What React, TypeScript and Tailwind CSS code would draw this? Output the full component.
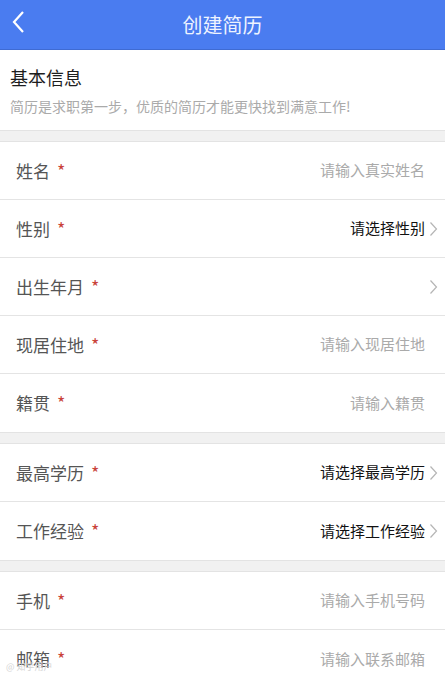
import React from 'react';

type Row = {
  label: string;
  kind: 'input' | 'select' | 'date';
  text?: string;
};

const groups: Row[][] = [
  [
    { label: '姓名', kind: 'input', text: '请输入真实姓名' },
    { label: '性别', kind: 'select', text: '请选择性别' },
    { label: '出生年月', kind: 'date' },
    { label: '现居住地', kind: 'input', text: '请输入现居住地' },
    { label: '籍贯', kind: 'input', text: '请输入籍贯' },
  ],
  [
    { label: '最高学历', kind: 'select', text: '请选择最高学历' },
    { label: '工作经验', kind: 'select', text: '请选择工作经验' },
  ],
  [
    { label: '手机', kind: 'input', text: '请输入手机号码' },
    { label: '邮箱', kind: 'input', text: '请输入联系邮箱' },
  ],
];

const Chevron: React.FC = () => (
  <svg width="9" height="16" viewBox="0 0 9 16" className="ml-[4px] shrink-0">
    <path d="M1.5 1.5 L7.5 8 L1.5 14.5" fill="none" stroke="#b5b5b5" strokeWidth="1.2" />
  </svg>
);

const FormRow: React.FC<{ row: Row; last: boolean }> = ({ row, last }) => (
  <div
    className={
      'flex h-[58px] items-center justify-between pl-[16px] pr-[7px] bg-white ' +
      (last ? '' : 'border-b border-[#e4e4e4]')
    }
  >
    <div className="flex items-center text-[17px] text-[#555]">
      <span>{row.label}</span>
      <span className="ml-[7px] -mt-[1px] text-[18px] text-[#c9433a]">*</span>
    </div>
    {row.kind === 'input' && (
      <span className="mr-[13px] text-[15px] text-[#aaa]">{row.text}</span>
    )}
    {row.kind === 'select' && (
      <div className="flex items-center">
        <span className="text-[15px] text-[#111]">{row.text}</span>
        <Chevron />
      </div>
    )}
    {row.kind === 'date' && <Chevron />}
  </div>
);

const Band: React.FC = () => (
  <div className="h-[12px] bg-[#f1f1f1] border-y border-[#e3e3e3]" />
);

export default function App() {
  return (
    <div
      className="relative h-[674px] w-[445px] overflow-hidden bg-white"
      style={{ fontFamily: '"Noto Sans CJK SC", "Noto Sans", sans-serif' }}
    >
      <header className="relative flex h-[50px] items-center justify-center bg-[#4a7cf0] border-b border-[#3f6bd3]">
        <svg width="16" height="24" viewBox="0 0 16 24" className="absolute left-[10px] top-[10px]">
          <path d="M13 2 L4 12 L13 22" fill="none" stroke="#ffffff" strokeWidth="2.2" />
        </svg>
        <h1 className="text-[20px] text-[#eef3ff]">创建简历</h1>
      </header>

      <section className="flex h-[80px] flex-col justify-center px-[10px]">
        <h2 className="text-[18px] leading-[26px] text-[#1e1e1e]">基本信息</h2>
        <p className="mt-[6px] text-[14px] leading-[20px] text-[#aaa]">
          简历是求职第一步，优质的简历才能更快找到满意工作!
        </p>
      </section>

      {groups.map((g, gi) => (
        <div key={gi}>
          <Band />
          {g.map((row, ri) => (
            <FormRow key={row.label} row={row} last={ri === g.length - 1} />
          ))}
        </div>
      ))}

      <div className="absolute bottom-[1px] left-[6px] text-[9px] text-[#d4d4d4]">@ 知乎用户</div>
    </div>
  );
}
